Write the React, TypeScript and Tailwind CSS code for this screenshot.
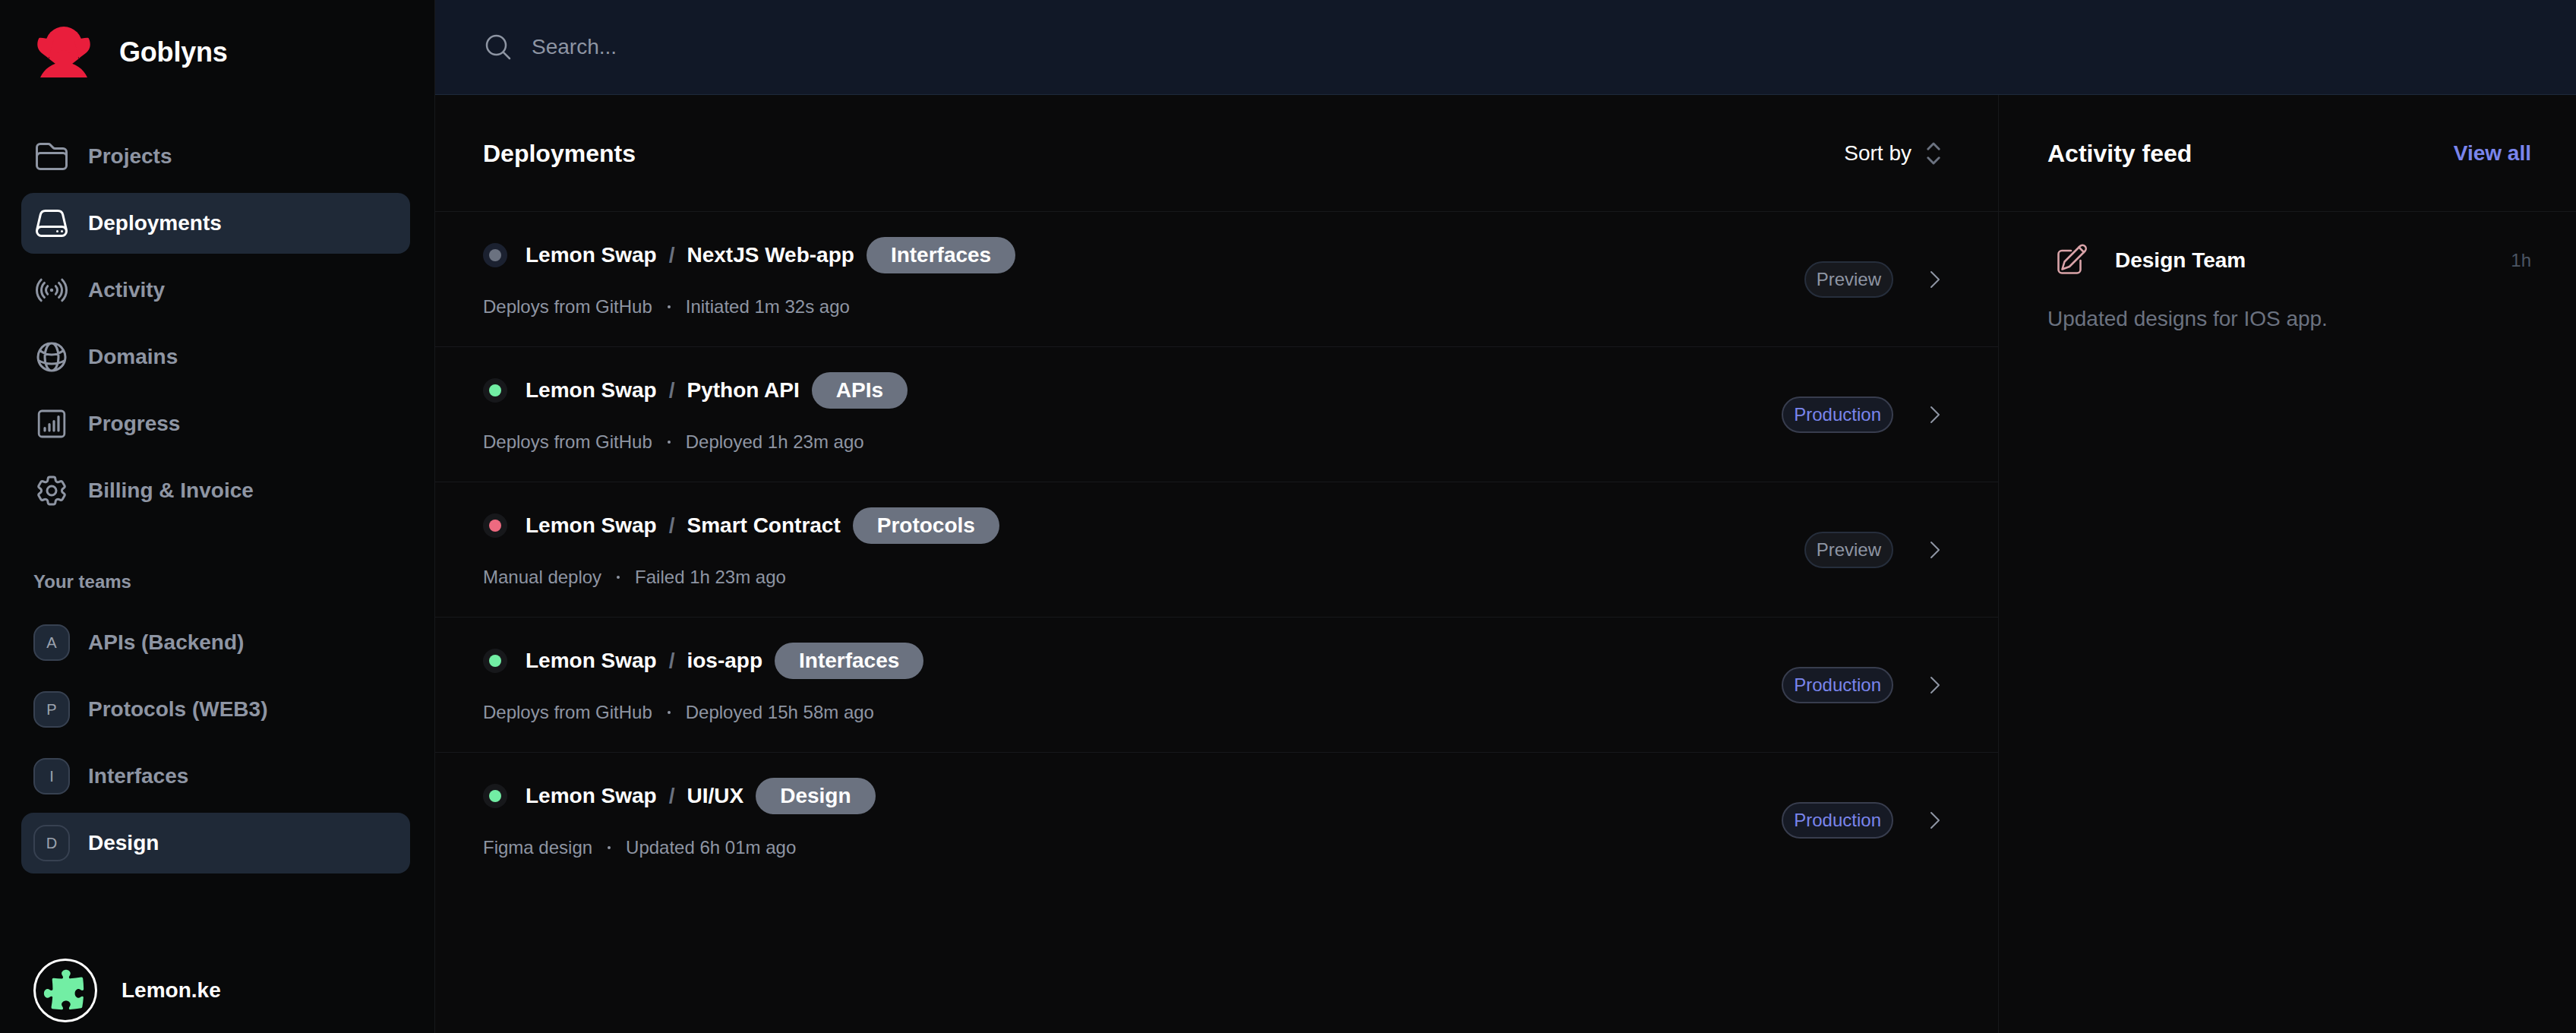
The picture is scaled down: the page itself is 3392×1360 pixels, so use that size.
import type { ComponentType, SVGProps } from 'react';
import {
  HiOutlineChevronRight,
  HiOutlineChevronUpDown,
  HiOutlineCog6Tooth,
  HiOutlineFolder,
  HiOutlineGlobeAlt,
  HiOutlineMagnifyingGlass,
  HiOutlineServer,
  HiOutlineSignal,
  HiPuzzlePiece,
} from 'react-icons/hi2';

type Icon = ComponentType<SVGProps<SVGSVGElement> & { size?: number | string }>;

function ProgressIcon({ className }: { className?: string }) {
  return (
    <svg viewBox="0 0 48 48" fill="none" stroke="currentColor" className={className}>
      <rect x="7.2" y="7" width="33.6" height="34" rx="4" strokeWidth="2.8" />
      <path d="M15 29.5V33M21 24.5V33M27 20.5V33M33 14.5V33" strokeWidth="3.2" strokeLinecap="round" />
    </svg>
  );
}

function LogoMark() {
  return (
    <svg viewBox="0 0 70 67" className="h-[67px] w-[70px] shrink-0" fill="#e91e3c">
      <ellipse cx="35" cy="25" rx="24.5" ry="25" />
      <path d="M2.500 15C.5 18 -.5 24 1 28 3.500 35 10 37 15 42L22 16C15 18 8 14 2.500 15Z" />
      <path d="M67.500 15C69.500 18 70.500 24 69 28 66.500 35 60 37 55 42L48 16C55 18 62 14 67.500 15Z" />
      <path d="M4 67C9 56 20 47 35 47 50 47 61 56 66 67Z" />
      <path d="M15 42 24 49H46L55 42 35 30Z" />
    </svg>
  );
}

function PencilIcon() {
  return (
    <svg viewBox="14 8 40 44" fill="none" stroke="#d9a3a8" strokeWidth="2.6" strokeLinejoin="round" strokeLinecap="round" className="ml-[13px] h-[44px] w-[40px] shrink-0">
      <path d="M32 17H20a4.5 4.5 0 0 0-4.5 4.5V42a4.5 4.5 0 0 0 4.5 4.5h20a4.5 4.5 0 0 0 4.5-4.5V30" />
      <path d="M20.5 41.500 23.500 31.500 44 11a4.600 4.600 0 0 1 6.500 6.500L30 38Z" />
      <path d="M42.500 12.500 49 19" />
    </svg>
  );
}

const navItems: { label: string; icon: Icon; active?: boolean }[] = [
  { label: 'Projects', icon: HiOutlineFolder },
  { label: 'Deployments', icon: HiOutlineServer, active: true },
  { label: 'Activity', icon: HiOutlineSignal },
  { label: 'Domains', icon: HiOutlineGlobeAlt },
  { label: 'Progress', icon: ProgressIcon },
  { label: 'Billing & Invoice', icon: HiOutlineCog6Tooth },
];

const teams = [
  { label: 'APIs (Backend)', letter: 'A' },
  { label: 'Protocols (WEB3)', letter: 'P' },
  { label: 'Interfaces', letter: 'I' },
  { label: 'Design', letter: 'D', active: true },
];

type Deployment = {
  name: string;
  tag: string;
  source: string;
  time: string;
  status: 'idle' | 'ok' | 'failed';
  env: 'Preview' | 'Production';
};

const deployments: Deployment[] = [
  { name: 'NextJS Web-app', tag: 'Interfaces', source: 'Deploys from GitHub', time: 'Initiated 1m 32s ago', status: 'idle', env: 'Preview' },
  { name: 'Python API', tag: 'APIs', source: 'Deploys from GitHub', time: 'Deployed 1h 23m ago', status: 'ok', env: 'Production' },
  { name: 'Smart Contract', tag: 'Protocols', source: 'Manual deploy', time: 'Failed 1h 23m ago', status: 'failed', env: 'Preview' },
  { name: 'ios-app', tag: 'Interfaces', source: 'Deploys from GitHub', time: 'Deployed 15h 58m ago', status: 'ok', env: 'Production' },
  { name: 'UI/UX', tag: 'Design', source: 'Figma design', time: 'Updated 6h 01m ago', status: 'ok', env: 'Production' },
];

function StatusDot({ status }: { status: Deployment['status'] }) {
  if (status === 'idle') {
    return (
      <span className="flex h-8 w-8 shrink-0 items-center justify-center rounded-full bg-[#1b2130]">
        <span className="h-4 w-4 rounded-full bg-[#6b7280]" />
      </span>
    );
  }
  return (
    <span className="flex h-8 w-8 shrink-0 items-center justify-center rounded-full bg-[#17181b]">
      <span className={status === 'ok' ? 'h-4 w-4 rounded-full bg-[#72eea4]' : 'h-4 w-4 rounded-full bg-[#ee6a80]'} />
    </span>
  );
}

function DeploymentRow({ item, last }: { item: Deployment; last: boolean }) {
  return (
    <div className={last ? 'flex h-[178px] items-center pl-[63px] pr-[67px]' : 'flex h-[178px] items-center border-b border-[#17181b] pl-[63px] pr-[67px]'}>
      <div className="flex flex-col gap-[28px] pb-1">
        <div className="flex h-12 items-center">
          <StatusDot status={item.status} />
          <div className="ml-6 flex items-center gap-4 text-[28px] font-bold text-white">
            <span>Lemon Swap</span>
            <span className="text-[#6b7280]">/</span>
            <span>{item.name}</span>
            <span className="flex h-12 items-center rounded-full bg-[#6b7280] px-8">{item.tag}</span>
          </div>
        </div>
        <div className="flex h-8 items-center gap-5 text-2xl text-[#8e95a3]">
          <span>{item.source}</span>
          <span className="h-1 w-1 rounded-full bg-[#8e95a3]" />
          <span>{item.time}</span>
        </div>
      </div>
      <div className="ml-auto flex items-center gap-[39px]">
        {item.env === 'Production' ? (
          <span className="flex h-12 items-center rounded-full border-2 border-[#383d4e] bg-[#161a25] px-[14px] text-2xl text-[#7a85ec]">Production</span>
        ) : (
          <span className="flex h-12 items-center rounded-full border-2 border-[#262e3c] bg-[#17191e] px-[14px] text-2xl text-[#8e95a3]">Preview</span>
        )}
        <HiOutlineChevronRight size={32} className="text-[#8e95a3]" />
      </div>
    </div>
  );
}

export default function App() {
  return (
    <div className="flex h-[1360px] w-full overflow-hidden bg-[#0a0a0b] font-['Liberation_Sans',Arial,sans-serif]">
      <aside className="flex w-[573px] shrink-0 flex-col border-r border-[#17181b] bg-[#08090a] pl-7 pr-8">
        <div className="flex h-[166px] items-start pl-[21px] pt-[35px]">
          <LogoMark />
          <span className="ml-[38px] mt-[14px] text-[36px] font-bold leading-10 tracking-[-0.2px] text-white">Goblyns</span>
        </div>
        <nav className="flex flex-col gap-2">
          {navItems.map((item) => (
            <a
              key={item.label}
              className={
                item.active
                  ? 'flex h-20 items-center gap-6 rounded-2xl bg-[#1f2937] px-4 text-[28px] font-bold text-white'
                  : 'flex h-20 items-center gap-6 rounded-2xl px-4 text-[28px] font-bold text-[#8e95a3]'
              }
            >
              <item.icon className="h-12 w-12 shrink-0" />
              {item.label}
            </a>
          ))}
        </nav>
        <div className="mt-16 h-8 pl-4 text-2xl font-bold leading-8 text-[#8e95a3]">Your teams</div>
        <div className="mt-6 flex flex-col gap-2">
          {teams.map((team) => (
            <a
              key={team.label}
              className={
                team.active
                  ? 'flex h-20 items-center gap-6 rounded-2xl bg-[#1f2937] px-4 text-[28px] font-bold text-white'
                  : 'flex h-20 items-center gap-6 rounded-2xl px-4 text-[28px] font-bold text-[#8e95a3]'
              }
            >
              <span className="flex h-12 w-12 shrink-0 items-center justify-center rounded-2xl border-2 border-[#374151] bg-[#1f2937] text-[20px] font-normal text-[#9ca3af]">
                {team.letter}
              </span>
              {team.label}
            </a>
          ))}
        </div>
        <div className="mt-auto flex items-center gap-8 pb-[14px] pl-4">
          <span className="flex h-[84px] w-[84px] shrink-0 items-center justify-center rounded-full border-[3px] border-white">
            <HiPuzzlePiece size={62} className="-ml-[2px] text-[#72eea4]" />
          </span>
          <span className="text-[28px] font-bold text-white">Lemon.ke</span>
        </div>
      </aside>

      <main className="flex min-w-0 flex-1 flex-col">
        <header className="flex h-[125px] shrink-0 items-center gap-6 border-b border-[#1e293b] bg-[#111827] pl-[63px] text-[28px] text-[#8e95a3]">
          <HiOutlineMagnifyingGlass size={40} className="text-[#8e95a3]" />
          <span>Search...</span>
        </header>
        <div className="flex min-h-0 flex-1">
          <section className="min-w-0 flex-1 border-r border-[#17181b]">
            <div className="flex h-[154px] items-center border-b border-[#17181b] pl-[63px] pr-[62px]">
              <h2 className="text-[32px] font-bold text-white">Deployments</h2>
              <button className="ml-auto flex items-center gap-[6px] text-[28px] text-white">
                Sort by
                <HiOutlineChevronUpDown size={46} className="text-[#6b7280]" />
              </button>
            </div>
            {deployments.map((item, i) => (
              <DeploymentRow key={item.name} item={item} last={i === deployments.length - 1} />
            ))}
          </section>
          <section className="w-[760px] shrink-0">
            <div className="flex h-[154px] items-center justify-between border-b border-[#17181b] pl-16 pr-[59px]">
              <h2 className="text-[32px] font-bold text-white">Activity feed</h2>
              <a className="text-[28px] font-bold text-[#7a85ec]">View all</a>
            </div>
            <div className="pl-16 pr-[59px] pt-[42px]">
              <div className="flex items-center">
                <PencilIcon />
                <span className="ml-9 text-[28px] font-bold text-white">Design Team</span>
                <span className="ml-auto text-2xl text-[#4b5563]">1h</span>
              </div>
              <p className="mt-[35px] text-[28px] leading-10 text-[#6b7280]">Updated designs for IOS app.</p>
            </div>
          </section>
        </div>
      </main>
    </div>
  );
}
